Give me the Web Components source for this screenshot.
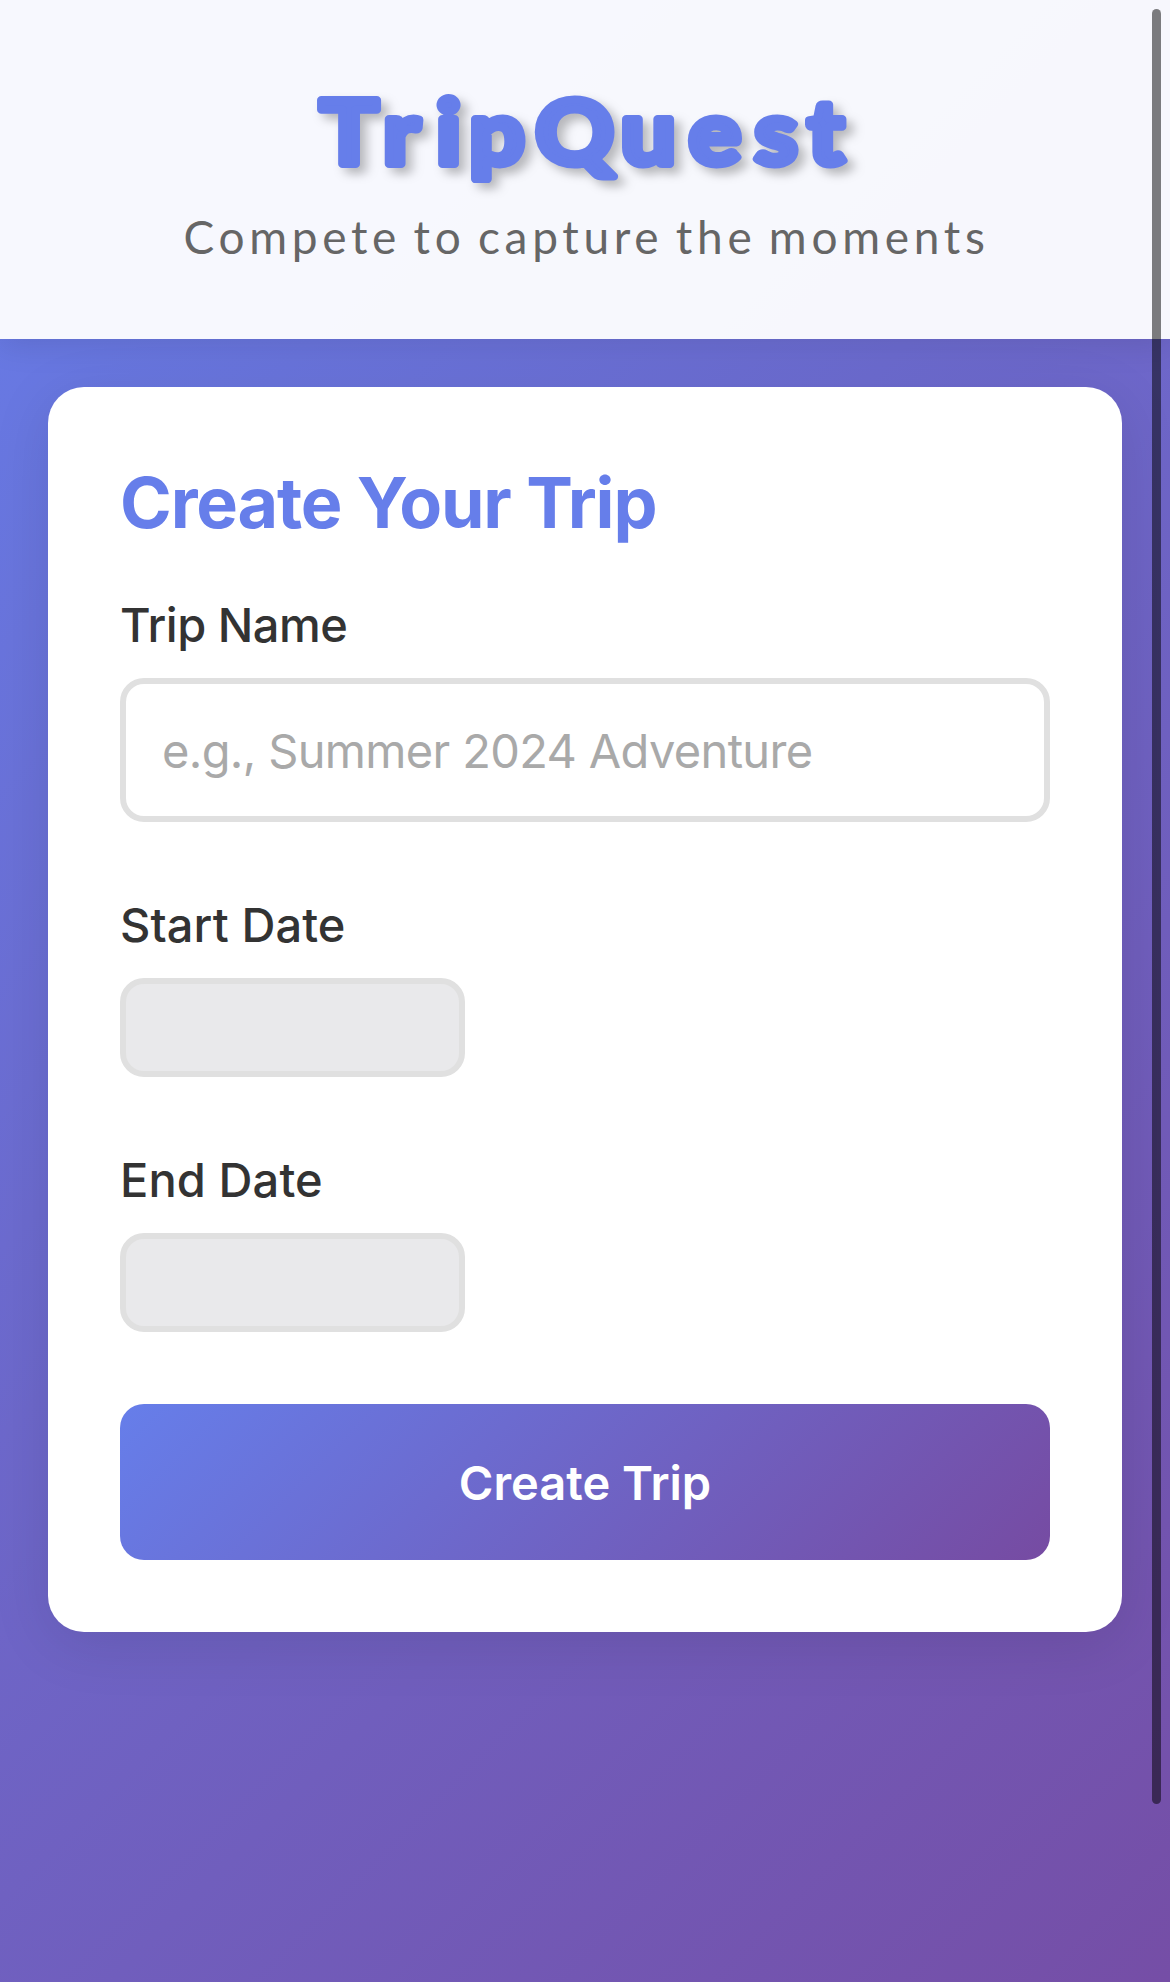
<!DOCTYPE html>
<html lang="en">
<head>
<meta charset="utf-8">
<title>TripQuest</title>
<style>
  html { height: 100%; }
  body {
    margin: 0;
    height: 1982px;
    overflow: hidden;
    color: #333;
    font-family: Inter, "Liberation Sans", sans-serif;
    background: linear-gradient(135deg, #667eea 0%, #764ba2 100%) 0 0 / 1170px 2168px no-repeat;
  }
</style>
</head>
<body>
<trip-header>Compete to capture the moments</trip-header>
<trip-card heading="Create Your Trip">
  <trip-field label="Trip Name" placeholder="e.g., Summer 2024 Adventure"></trip-field>
  <trip-field label="Start Date" kind="date"></trip-field>
  <trip-field label="End Date" kind="date"></trip-field>
  <trip-button>Create Trip</trip-button>
</trip-card>
<scroll-thumb></scroll-thumb>

<script>
class TripHeader extends HTMLElement {
  constructor() {
    super();
    this.attachShadow({ mode: 'open' });
    this.shadowRoot.innerHTML = `
    <style>
      :host {
        display: block;
        box-sizing: border-box;
        height: 339px;
        padding-top: 66px;
        background: rgba(255,255,255,.95);
        box-shadow: 0 6px 30px rgba(0,0,0,.1);
        text-align: center;
      }
      svg { display: block; margin: 0 auto; overflow: visible; }
      /* thick round stroke gives the letters their soft corners */
      text {
        font-family: Lato, sans-serif;
        font-weight: 700;
        font-size: 88px;
        fill: #667eea;
        stroke: #667eea;
        stroke-width: 8px;
        stroke-linejoin: round;
        filter: drop-shadow(6px 6px 5px rgba(0,0,0,.26));
      }
      p {
        margin: 2px 0 0;
        padding-left: 3px;
        font: 400 46px/58px Lato, sans-serif;
        letter-spacing: 4.7px;
        word-spacing: -4px;
        color: #666;
      }
    </style>
    <svg width="600" height="140" viewBox="285 66 600 140" role="heading" aria-level="1">
      <text y="163.7" transform="scale(1.1 1)" x="291 348.5 396.7 426.8 486.9 564.5 626.3 686.2 734.3">TripQuest</text>
    </svg>
    <p><slot></slot></p>
    `;
  }
}

class TripCard extends HTMLElement {
  constructor() {
    super();
    this.attachShadow({ mode: 'open' });
    this.shadowRoot.innerHTML = `
    <style>
      :host {
        display: flex;
        flex-direction: column;
        box-sizing: border-box;
        margin: 48px 48px 0;
        padding: 72px;
        background: #fff;
        border-radius: 36px;
        box-shadow: 0 12px 60px rgba(0,0,0,.1);
      }
      h2 {
        margin: 0 0 50px;
        font-size: 70px;
        line-height: 87px;
        font-weight: 700;
        letter-spacing: -1.15px;
        color: #667eea;
      }
      .fields { display: flex; flex-direction: column; gap: 74px; }
    </style>
    <h2></h2>
    <div class="fields"><slot></slot></div>
    `;
  }
  connectedCallback() {
    this.shadowRoot.querySelector('h2').textContent = this.getAttribute('heading');
  }
}

class TripField extends HTMLElement {
  constructor() {
    super();
    this.attachShadow({ mode: 'open' });
    this.shadowRoot.innerHTML = `
    <style>
      :host { display: flex; flex-direction: column; align-items: flex-start; gap: 24px; }
      label {
        font-size: 47px;
        line-height: 58px;
        font-weight: 500;
        letter-spacing: -.5px;
      }
      input {
        box-sizing: border-box;
        width: 100%;
        height: 144px;
        margin: 0;
        padding: 0 36px;
        border: 6px solid #e0e0e0;
        border-radius: 24px;
        background: #fff;
        font: 400 47px Inter, sans-serif;
        letter-spacing: -.65px;
        outline: none;
      }
      input::placeholder { color: #a9a9a9; opacity: 1; }
      :host([kind="date"]) label { letter-spacing: .1px; }
      :host([kind="date"]) input { width: 345px; height: 99px; background: #e9e9eb; }
    </style>
    <label for="field"></label>
    <input id="field" type="text">
    `;
  }
  connectedCallback() {
    this.shadowRoot.querySelector('label').textContent = this.getAttribute('label');
    this.shadowRoot.querySelector('input').placeholder = this.getAttribute('placeholder') || '';
  }
}

class TripButton extends HTMLElement {
  constructor() {
    super();
    this.attachShadow({ mode: 'open' });
    this.shadowRoot.innerHTML = `
    <style>
      :host { display: block; margin-top: -2px; }
      button {
        display: block;
        width: 100%;
        height: 156px;
        padding: 0;
        border: 0;
        border-radius: 24px;
        background: linear-gradient(135deg, #667eea 0%, #764ba2 100%);
        color: #fff;
        font: 600 47px Inter, sans-serif;
        letter-spacing: 0;
        cursor: pointer;
      }
    </style>
    <button><slot></slot></button>
    `;
  }
}

class ScrollThumb extends HTMLElement {
  constructor() {
    super();
    this.attachShadow({ mode: 'open' });
    this.shadowRoot.innerHTML = `
    <style>
      :host {
        position: fixed;
        top: 9px;
        right: 9px;
        width: 9px;
        height: 1795px;
        border-radius: 5px;
        background: rgba(0,0,0,.5);
      }
    </style>
    `;
  }
}

customElements.define('trip-header', TripHeader);
customElements.define('trip-card', TripCard);
customElements.define('trip-field', TripField);
customElements.define('trip-button', TripButton);
customElements.define('scroll-thumb', ScrollThumb);
</script>
</body>
</html>
